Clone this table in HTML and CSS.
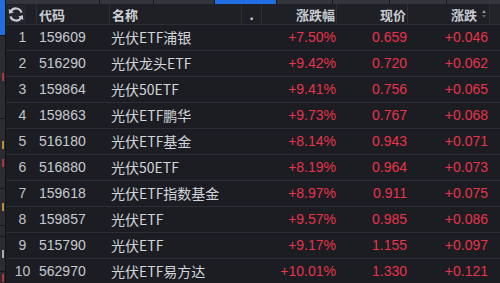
FILE: index.html
```html
<!DOCTYPE html>
<html lang="zh">
<head>
<meta charset="utf-8">
<link rel="stylesheet" href="styles.css">
</head>
<body>
<div class="screen">
  <div class="side">
    <div class="seg seg-blue"></div>
    <div class="seg seg-a"><i class="mark red"></i></div>
    <div class="seg seg-b"><i class="mark orange"></i><i class="mark red"></i></div>
    <div class="seg seg-c"><i class="mark orange"></i></div>
    <div class="seg seg-d"></div>
    <div class="seg seg-e"><i class="mark white"></i></div>
    <div class="seg seg-f"><i class="mark red"></i></div>
  </div>
  <div class="content">
    <div class="tabs">
      <span class="tab t1"></span><span class="tab t2"></span><span class="tab t3"></span><span class="tab t4 active"></span><span class="tab t5"></span><span class="tab t6"></span><span class="tab t7"></span><span class="tab t8"></span>
    </div>
    <div class="table">
      <div class="row head">
        <div class="cell idx"><span class="refresh"><svg width="18" height="15" viewBox="0 0 16 14"><path d="M13.2 5.2 A5.6 5.6 0 0 0 3 4.2" fill="none" stroke="#c9cdd3" stroke-width="2"/><path d="M1.2 1.8 L1.6 6.4 L6 5.2 Z" fill="#c9cdd3"/><path d="M2.8 8.8 A5.6 5.6 0 0 0 13 9.8" fill="none" stroke="#c9cdd3" stroke-width="2"/><path d="M14.8 12.2 L14.4 7.6 L10 8.8 Z" fill="#c9cdd3"/></svg></span></div>
        <div class="cell code">代码</div>
        <div class="cell name">名称</div>
        <div class="cell dot">.</div>
        <div class="cell num">涨跌幅</div>
        <div class="cell num">现价</div>
        <div class="cell num chg">涨跌<span class="sort"><i class="up"></i><i class="down"></i></span></div>
        <div class="cell bar"></div>
      </div>
      <div class="row"><div class="cell idx">1</div><div class="cell code">159609</div><div class="cell name">光伏ETF浦银</div><div class="cell dot"></div><div class="cell num red">+7.50%</div><div class="cell num red">0.659</div><div class="cell num chg red">+0.046</div><div class="cell bar"></div></div>
      <div class="row"><div class="cell idx">2</div><div class="cell code">516290</div><div class="cell name">光伏龙头ETF</div><div class="cell dot"></div><div class="cell num red">+9.42%</div><div class="cell num red">0.720</div><div class="cell num chg red">+0.062</div><div class="cell bar"></div></div>
      <div class="row"><div class="cell idx">3</div><div class="cell code">159864</div><div class="cell name">光伏50ETF</div><div class="cell dot"></div><div class="cell num red">+9.41%</div><div class="cell num red">0.756</div><div class="cell num chg red">+0.065</div><div class="cell bar"></div></div>
      <div class="row"><div class="cell idx">4</div><div class="cell code">159863</div><div class="cell name">光伏ETF鹏华</div><div class="cell dot"></div><div class="cell num red">+9.73%</div><div class="cell num red">0.767</div><div class="cell num chg red">+0.068</div><div class="cell bar"></div></div>
      <div class="row"><div class="cell idx">5</div><div class="cell code">516180</div><div class="cell name">光伏ETF基金</div><div class="cell dot"></div><div class="cell num red">+8.14%</div><div class="cell num red">0.943</div><div class="cell num chg red">+0.071</div><div class="cell bar"></div></div>
      <div class="row"><div class="cell idx">6</div><div class="cell code">516880</div><div class="cell name">光伏50ETF</div><div class="cell dot"></div><div class="cell num red">+8.19%</div><div class="cell num red">0.964</div><div class="cell num chg red">+0.073</div><div class="cell bar"></div></div>
      <div class="row"><div class="cell idx">7</div><div class="cell code">159618</div><div class="cell name">光伏ETF指数基金</div><div class="cell dot"></div><div class="cell num red">+8.97%</div><div class="cell num red">0.911</div><div class="cell num chg red">+0.075</div><div class="cell bar"></div></div>
      <div class="row"><div class="cell idx">8</div><div class="cell code">159857</div><div class="cell name">光伏ETF</div><div class="cell dot"></div><div class="cell num red">+9.57%</div><div class="cell num red">0.985</div><div class="cell num chg red">+0.086</div><div class="cell bar"></div></div>
      <div class="row"><div class="cell idx">9</div><div class="cell code">515790</div><div class="cell name">光伏ETF</div><div class="cell dot"></div><div class="cell num red">+9.17%</div><div class="cell num red">1.155</div><div class="cell num chg red">+0.097</div><div class="cell bar"></div></div>
      <div class="row"><div class="cell idx">10</div><div class="cell code">562970</div><div class="cell name">光伏ETF易方达</div><div class="cell dot"></div><div class="cell num red">+10.01%</div><div class="cell num red">1.330</div><div class="cell num chg red">+0.121</div><div class="cell bar"></div></div>
    </div>
  </div>
</div>
</body>
</html>
```
FILE: styles.css
```css
html, body {
  margin: 0;
  padding: 0;
  background: #1b1d22;
  overflow: hidden;
}
.screen {
  width: 500px;
  height: 283px;
  display: flex;
  overflow: hidden;
  font-family: "Liberation Sans", "Noto Sans CJK SC", sans-serif;
  font-size: 14px;
  color: #c6cad0;
}
.side {
  width: 5px;
  flex: none;
  display: flex;
  flex-direction: column;
  gap: 1px;
  background: #141518;
  border-right: 1px solid #121316;
}
.seg {
  background: #2a2c31;
  display: flex;
  flex-direction: column;
  justify-content: center;
  gap: 10px;
}
.seg-blue { height: 35px; background: #1f6fe3; }
.seg-a { height: 82px; }
.seg-b { height: 69px; }
.seg-c { height: 36px; }
.seg-d { height: 10px; }
.seg-e { height: 34px; }
.seg-f { flex: 1; }
.mark {
  display: block;
  width: 2px;
  height: 8px;
  margin-left: 2px;
}
.mark.red { background: #b0343f; }
.mark.orange { background: #c08a3a; }
.mark.white { background: #a8acb2; }
.content {
  flex: 1;
  display: flex;
  flex-direction: column;
  min-width: 0;
}
.tabs {
  height: 4px;
  display: flex;
  gap: 1px;
  background: #15161a;
  flex: none;
}
.tab { background: #33363c; height: 4px; }
.tab.active { background: #1f6fe3; }
.t1 { width: 93px; }
.t2 { width: 53px; }
.t3 { width: 60px; }
.t4 { width: 61px; }
.t5 { width: 55px; }
.t6 { width: 56px; }
.t7 { width: 56px; }
.t8 { flex: 1; }
.table {
  display: flex;
  flex-direction: column;
}
.row {
  display: grid;
  grid-template-columns: 31px 73px 132px 20px 75px 71px 82px 10px;
  height: 26px;
  box-sizing: border-box;
  border-bottom: 1px solid #2b2e35;
  align-items: center;
}
.row.head {
  height: 21px;
  background: #1e2025;
  border-bottom: 1px solid #2a2d33;
  align-items: stretch;
  font-family: "Noto Sans CJK SC", sans-serif;
  font-size: 13px;
  font-weight: bold;
  color: #c9cdd3;
}
.head .cell {
  display: flex;
  align-items: center;
  line-height: 1;
  border-right: 1px solid #2c2f35;
}
.head .num { justify-content: flex-end; }
.head .bar { border-right: none; background: #22242a; }
.cell {
  white-space: nowrap;
  overflow: hidden;
  line-height: 25px;
}
.idx {
  text-align: center;
  padding-left: 2px;
  color: #c0c4ca;
}
.head .idx { justify-content: flex-start; padding-left: 0; }
.refresh {
  display: flex;
  align-items: center;
  justify-content: center;
  width: 20px;
  height: 18px;
  background: #24262c;
}
.code { padding-left: 2px; }
.name {
  padding-left: 1px;
  font-family: "Noto Sans CJK SC", sans-serif;
  color: #d2d5da;
}
.head .name { padding-left: 2px; }
.dot {
  color: #d0d4da;
  justify-content: center;
}
.num {
  text-align: right;
  padding-right: 1px;
}
.chg { padding-right: 2px; }
.head .num { padding-right: 1px; }
.head .chg { padding-right: 3px; }
.red { color: #e8334b; }
.sort {
  display: flex;
  flex-direction: column;
  gap: 2px;
  margin-left: 5px;
}
.sort i {
  display: block;
  width: 0;
  height: 0;
  border-left: 2.5px solid transparent;
  border-right: 2.5px solid transparent;
}
.sort .up { border-bottom: 3px solid #8d9198; }
.sort .down { border-top: 3px solid #5a5e65; }
```
